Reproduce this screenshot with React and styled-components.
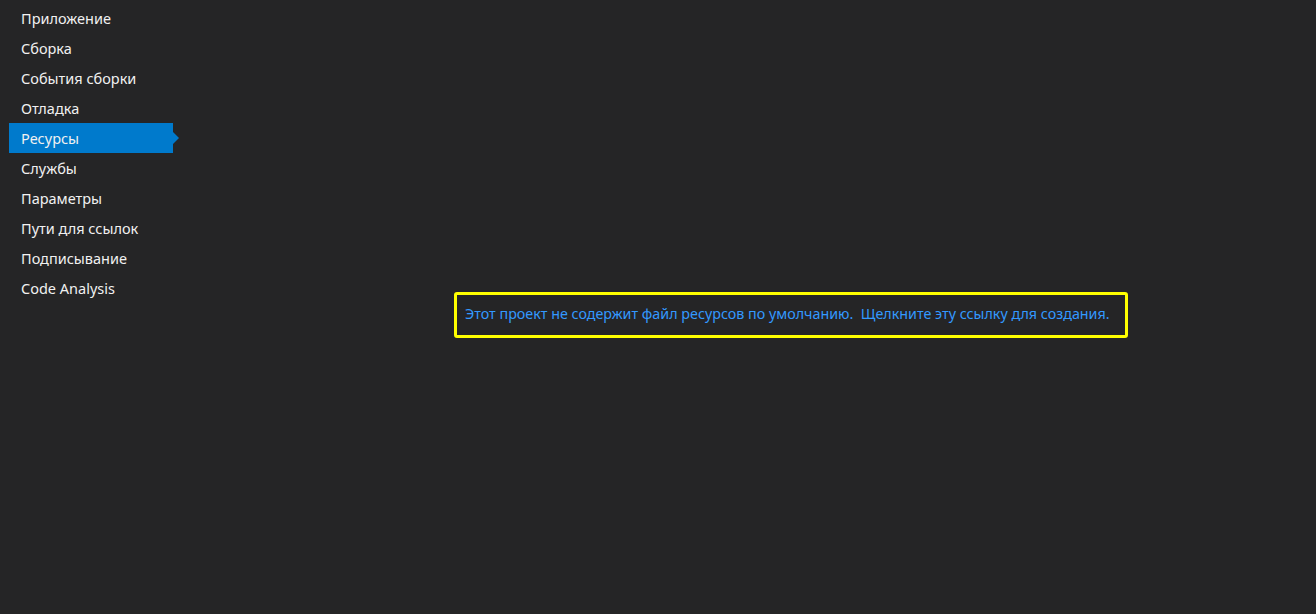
import React from "react";
import styled, { createGlobalStyle } from "styled-components";

const GlobalStyle = createGlobalStyle`
  html, body {
    margin: 0;
    padding: 0;
    background: #252526;
  }
  body {
    font-family: "Noto Sans", "Open Sans", sans-serif;
  }
`;

const Page = styled.div`
  width: 1316px;
  height: 614px;
  display: flex;
  background: #252526;
  overflow: hidden;
`;

const Nav = styled.ul`
  list-style: none;
  margin: 0;
  padding: 3px 0 0 9px;
  width: 164px;
  flex-shrink: 0;
`;

const NavItem = styled.li`
  position: relative;
  height: 30px;
  line-height: 30px;
  padding-left: 12px;
  font-size: 14.5px;
  color: #f1f1f1;
  background: ${(props) => (props.active ? "#007acc" : "transparent")};
  cursor: pointer;

  &::after {
    content: "";
    display: ${(props) => (props.active ? "block" : "none")};
    position: absolute;
    right: -6px;
    top: 9px;
    border-top: 6px solid transparent;
    border-bottom: 6px solid transparent;
    border-left: 6px solid #007acc;
  }
`;

const Main = styled.div`
  flex: 1;
  padding: 292px 0 0 281px;
`;

const Notice = styled.div`
  box-sizing: border-box;
  width: 674px;
  height: 46px;
  border: 3px solid #ffff00;
  border-radius: 3px;
  display: flex;
  align-items: center;
  padding: 0 0 3px 8px;
`;

const Link = styled.a`
  font-size: 14.3px;
  color: #3399ff;
  text-decoration: none;
  cursor: pointer;
  white-space: pre;
`;

const items = [
  "Приложение",
  "Сборка",
  "События сборки",
  "Отладка",
  "Ресурсы",
  "Службы",
  "Параметры",
  "Пути для ссылок",
  "Подписывание",
  "Code Analysis",
];

const App = () => {
  return (
    <>
      <GlobalStyle />
      <Page>
        <Nav>
          {items.map((item) => (
            <NavItem key={item} active={item === "Ресурсы"}>
              {item}
            </NavItem>
          ))}
        </Nav>
        <Main>
          <Notice>
            <Link>
              Этот проект не содержит файл ресурсов по умолчанию.  Щелкните эту ссылку для создания.
            </Link>
          </Notice>
        </Main>
      </Page>
    </>
  );
};

export default App;
